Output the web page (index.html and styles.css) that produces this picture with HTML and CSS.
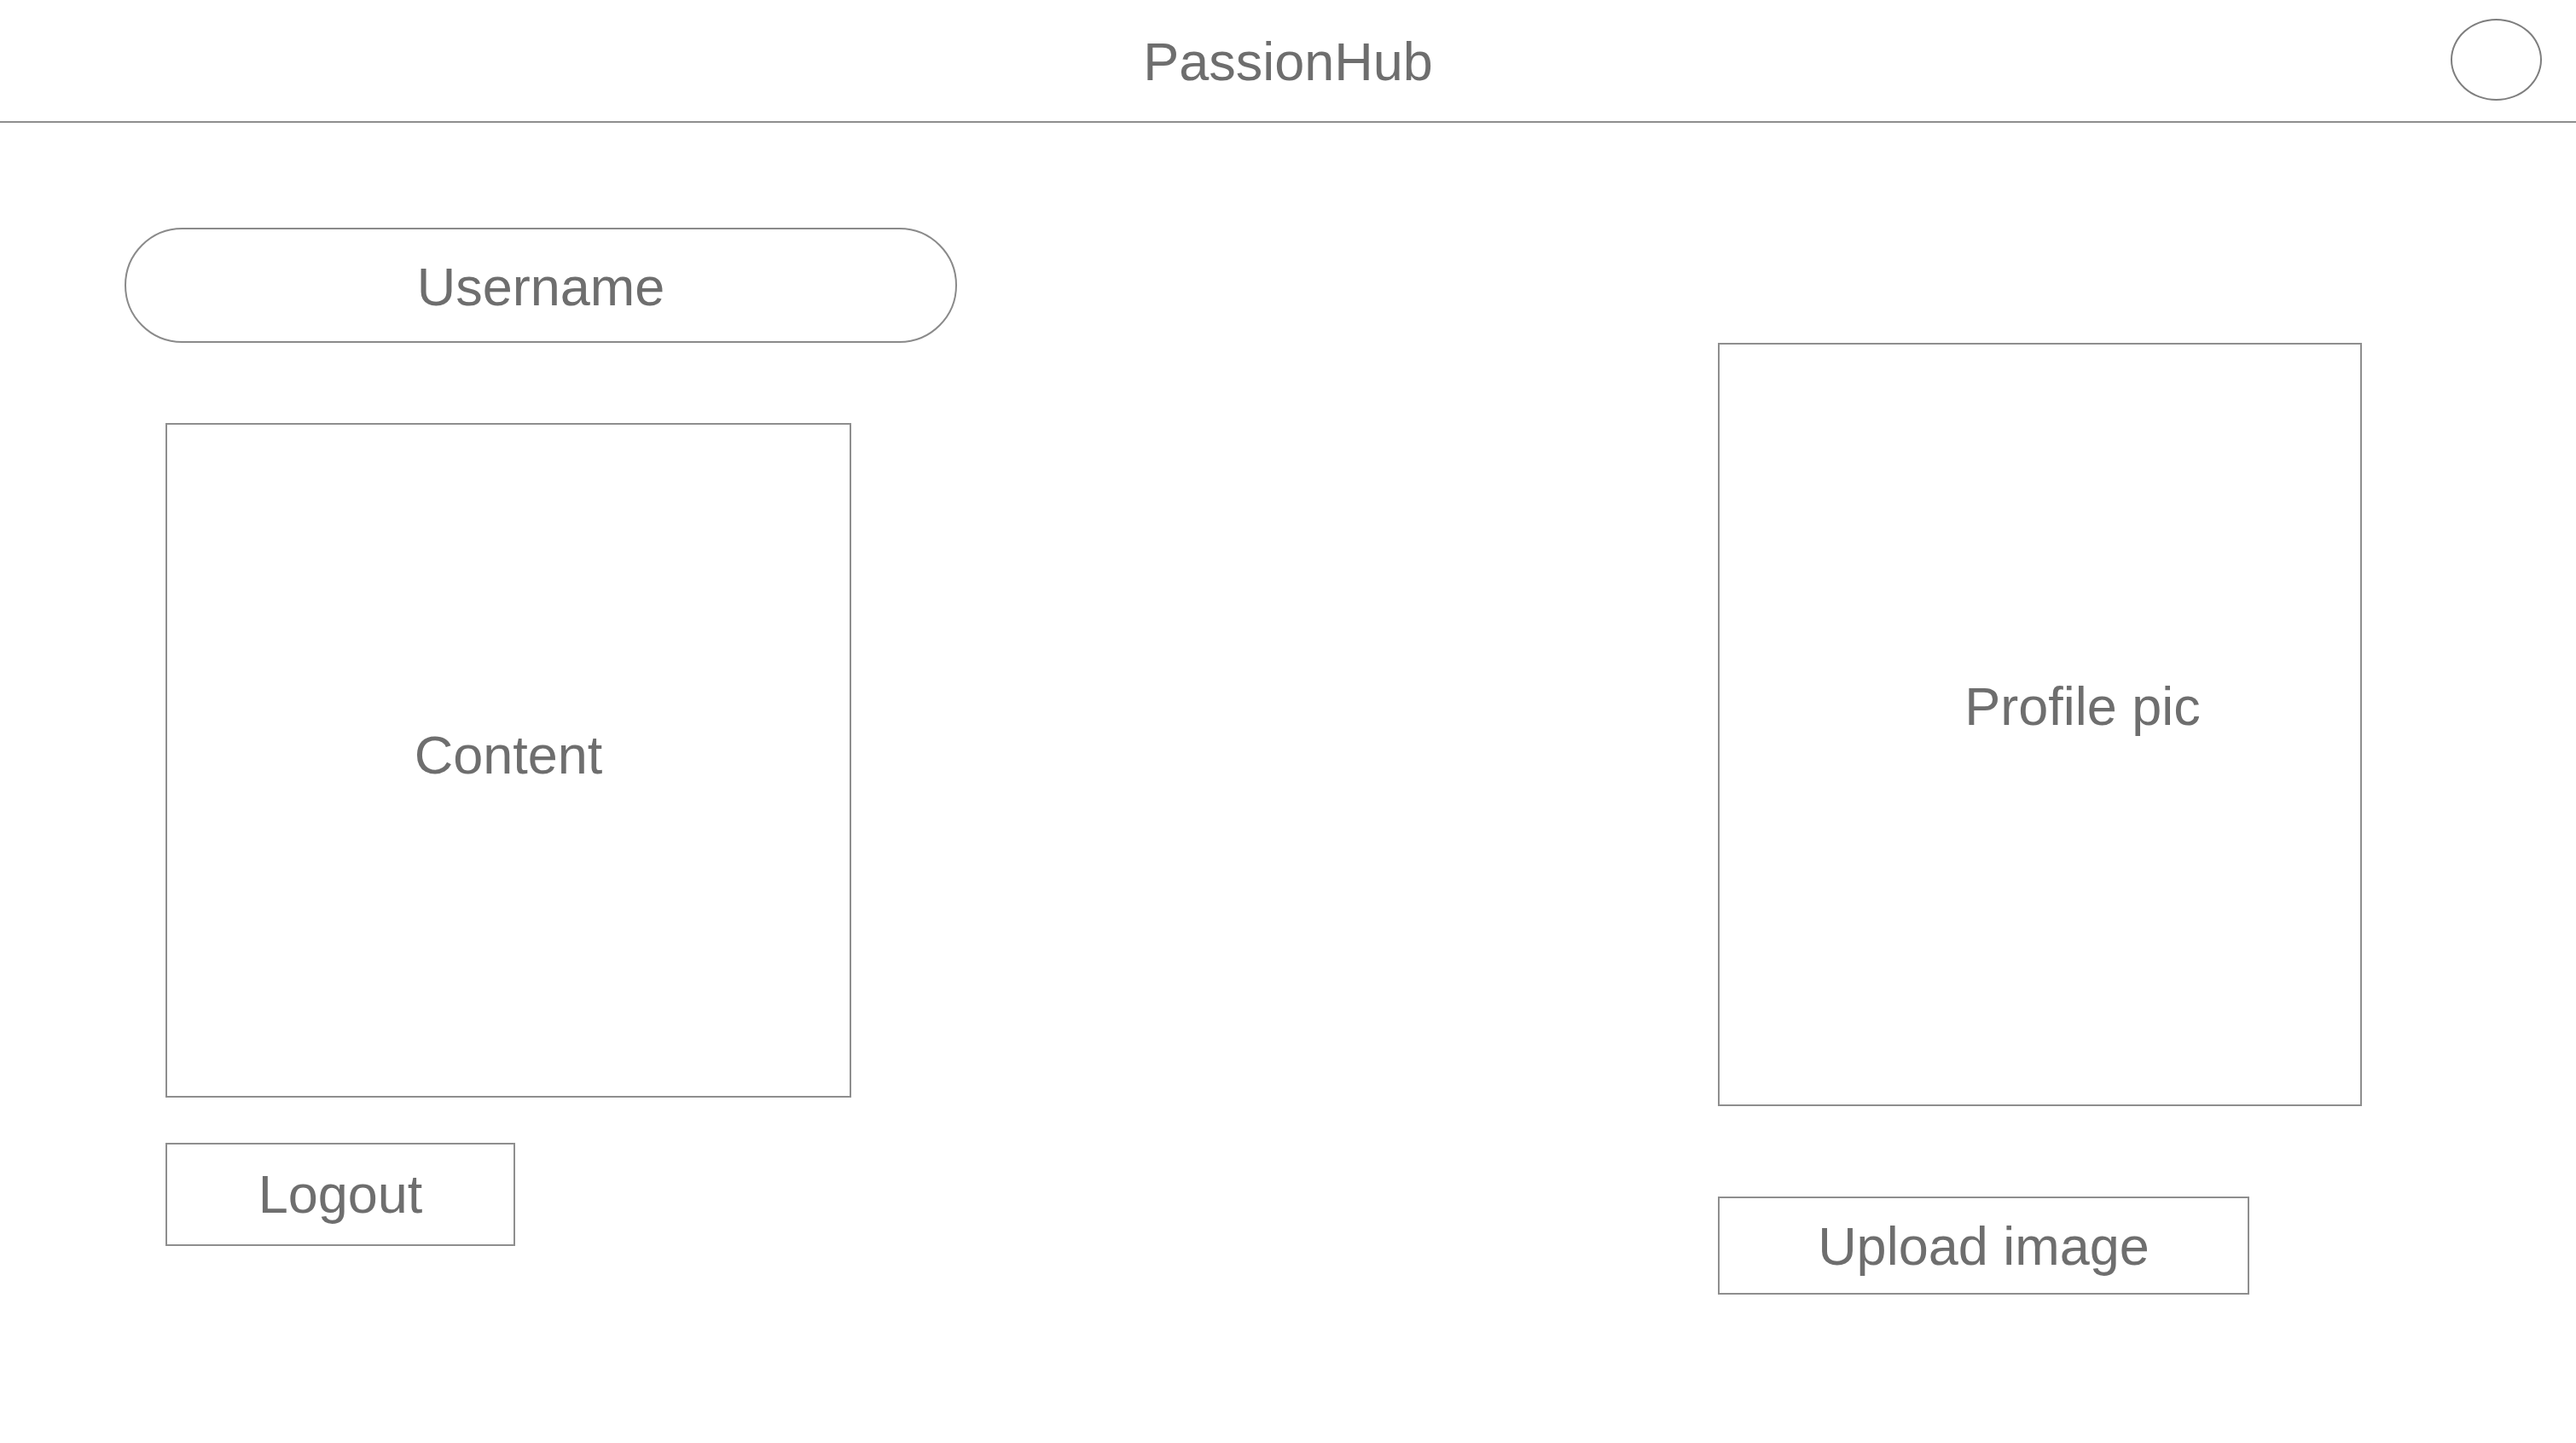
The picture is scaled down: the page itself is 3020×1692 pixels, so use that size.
FILE: index.html
```html
<!DOCTYPE html>
<html lang="en">
<head>
<meta charset="utf-8">
<title>PassionHub</title>
<link rel="stylesheet" href="styles.css">
</head>
<body>
<header class="topbar">
  <div class="topbar-spacer"></div>
  <h1 class="brand">PassionHub</h1>
  <div class="avatar-wrap"><div class="avatar"></div></div>
</header>
<main class="page">
  <section class="left-col">
    <div class="username">Username</div>
    <div class="content-box"><span class="content-label">Content</span></div>
    <button class="btn logout">Logout</button>
  </section>
  <section class="right-col">
    <div class="profile-box"><span class="profile-label">Profile pic</span></div>
    <button class="btn upload">Upload image</button>
  </section>
</main>
<div class="corner"></div>
</body>
</html>
```

FILE: styles.css
```css
* { box-sizing: border-box; }
html, body {
  margin: 0;
  padding: 0;
  background: #ffffff;
}
body {
  width: 3020px;
  height: 1692px;
  overflow: hidden;
  font-family: "Liberation Sans", Arial, Helvetica, sans-serif;
  color: #6e6e6e;
  position: relative;
}
.topbar {
  height: 144px;
  border-bottom: 2px solid #8e8e8e;
  display: grid;
  grid-template-columns: 1fr auto 1fr;
  align-items: center;
}
.brand {
  margin: 0;
  font-weight: normal;
  font-size: 63px;
  line-height: 1;
  color: #6e6e6e;
  padding-top: 2px;
}
.avatar-wrap {
  display: flex;
  justify-content: flex-end;
  padding-right: 40px;
  padding-bottom: 2px;
}
.avatar {
  width: 107px;
  height: 96px;
  border: 2px solid #7e7e7e;
  border-radius: 50%;
}
.page {
  display: flex;
  justify-content: space-between;
  align-items: flex-start;
  padding: 0 251px 0 146px;
}
.left-col {
  width: 975px;
  padding-top: 123px;
  display: flex;
  flex-direction: column;
  align-items: flex-start;
}
.username {
  width: 976px;
  height: 135px;
  border: 2px solid #8a8a8a;
  border-radius: 68px;
  display: flex;
  align-items: center;
  justify-content: center;
  font-size: 63px;
  line-height: 1;
  padding-top: 4px;
}
.content-box {
  margin-top: 94px;
  margin-left: 48px;
  width: 804px;
  height: 791px;
  border: 2px solid #8e8e8e;
  display: flex;
  align-items: center;
  justify-content: center;
  padding-bottom: 12px;
}
.content-label, .profile-label {
  font-size: 63px;
  line-height: 1;
}
.btn {
  font-family: inherit;
  color: #6e6e6e;
  background: #ffffff;
  border: 2px solid #8e8e8e;
  font-size: 63px;
  line-height: 1;
  padding: 0;
  margin: 0;
  display: flex;
  align-items: center;
  justify-content: center;
  border-radius: 0;
}
.logout {
  margin-top: 53px;
  margin-left: 48px;
  width: 410px;
  height: 121px;
}
.right-col {
  width: 755px;
  padding-top: 258px;
  display: flex;
  flex-direction: column;
  align-items: flex-start;
}
.profile-box {
  width: 755px;
  height: 895px;
  border: 2px solid #8e8e8e;
  display: flex;
  align-items: center;
  justify-content: center;
  padding-left: 100px;
  padding-bottom: 42px;
}
.upload {
  margin-top: 106px;
  width: 623px;
  height: 115px;
  padding-top: 2px;
}
.corner {
  position: absolute;
  right: 0;
  bottom: 0;
  width: 16px;
  height: 22px;
  background: radial-gradient(circle at 0 0, #ffffff 0, #ffffff 28px, #1a1a22 29px);
}
```
